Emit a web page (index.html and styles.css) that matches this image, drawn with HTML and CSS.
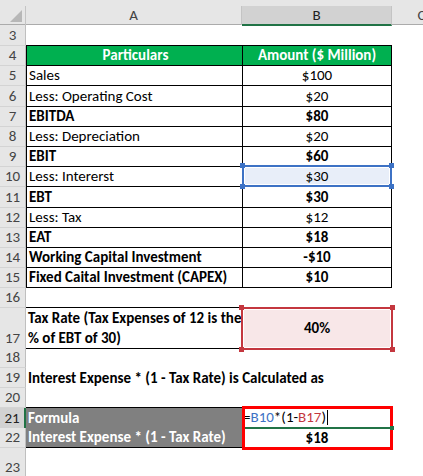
FILE: index.html
```html
<!DOCTYPE html>
<html>
<head>
<meta charset="utf-8">
<link rel="stylesheet" href="styles.css">
</head>
<body>
<div class="sheet">
  <div class="colhdr">
    <div class="corner"><svg width="26" height="25" viewBox="0 0 26 25"><polygon points="22,10 22,22 10,22" fill="#b7b7b7"/></svg></div>
    <div class="ch">A</div>
    <div class="ch sel">B</div>
    <div class="ch">C</div>
  </div>

  <div class="row r3"><div class="rh">3</div><div class="c a bb"></div><div class="c b bb"></div><div class="c"></div></div>
  <div class="row rt"><div class="rh">4</div><div class="c a tbl head">Particulars</div><div class="c b tbl head">Amount ($ Million)</div><div class="c"></div></div>
  <div class="row rt"><div class="rh">5</div><div class="c a tbl">Sales</div><div class="c b tbl">$100</div><div class="c"></div></div>
  <div class="row rt"><div class="rh">6</div><div class="c a tbl">Less: Operating Cost</div><div class="c b tbl">$20</div><div class="c"></div></div>
  <div class="row rt"><div class="rh">7</div><div class="c a tbl bold">EBITDA</div><div class="c b tbl bold">$80</div><div class="c"></div></div>
  <div class="row rt"><div class="rh">8</div><div class="c a tbl">Less: Depreciation</div><div class="c b tbl">$20</div><div class="c"></div></div>
  <div class="row rt"><div class="rh">9</div><div class="c a tbl bold">EBIT</div><div class="c b tbl bold">$60</div><div class="c"></div></div>
  <div class="row rt"><div class="rh">10</div><div class="c a tbl">Less: Intererst</div><div class="c b tbl refblue">$30<span class="hl hl-blue"><i class="h tl"></i><i class="h tr"></i><i class="h bl"></i><i class="h br"></i></span></div><div class="c"></div></div>
  <div class="row rt"><div class="rh">11</div><div class="c a tbl bold">EBT</div><div class="c b tbl bold">$30</div><div class="c"></div></div>
  <div class="row rt"><div class="rh">12</div><div class="c a tbl">Less: Tax</div><div class="c b tbl">$12</div><div class="c"></div></div>
  <div class="row rt"><div class="rh">13</div><div class="c a tbl bold">EAT</div><div class="c b tbl bold">$18</div><div class="c"></div></div>
  <div class="row rt"><div class="rh">14</div><div class="c a tbl bold">Working Capital Investment</div><div class="c b tbl bold">-$10</div><div class="c"></div></div>
  <div class="row rt"><div class="rh">15</div><div class="c a tbl bold">Fixed Caital Investment (CAPEX)</div><div class="c b tbl bold">$10</div><div class="c"></div></div>
  <div class="row r20"><div class="rh">16</div><div class="c a bb"></div><div class="c b"></div><div class="c"></div></div>
  <div class="row r17"><div class="rh">17</div><div class="c a bb bold wrap">Tax Rate (Tax Expenses of 12 is the<br>% of EBT of 30)</div><div class="c b bold mid refred">40%<span class="hl hl-red"><i class="h tl"></i><i class="h tr"></i><i class="h bl"></i><i class="h br"></i></span></div><div class="c"></div></div>
  <div class="row r20"><div class="rh">18</div><div class="c a"></div><div class="c b"></div><div class="c"></div></div>
  <div class="row r20"><div class="rh">19</div><div class="c a bold spill">Interest Expense * (1 - Tax Rate) is Calculated as</div><div class="c b"></div><div class="c"></div></div>
  <div class="row r20"><div class="rh">20</div><div class="c a bb"></div><div class="c b bb"></div><div class="c"></div></div>
  <div class="row r20"><div class="rh act">21</div><div class="c a gray gsep">Formula</div><div class="c b edit"><span class="fx">=<span class="rb">B10</span>*(1-<span class="rr">B17</span>)</span><span class="caret"></span><span class="redbox"></span><i class="gh"></i></div><div class="c"></div></div>
  <div class="row r20"><div class="rh">22</div><div class="c a gray bb">Interest Expense * (1 - Tax Rate)</div><div class="c b bold">$18</div><div class="c"></div></div>
  <div class="row r23"><div class="rh">23</div><div class="c a"></div><div class="c b"></div><div class="c"></div></div>
</div>
</body>
</html>
```

FILE: styles.css
```css
html, body {
  margin: 0;
  padding: 0;
  background: #ffffff;
  overflow: hidden;
}
body {
  width: 423px;
  height: 476px;
  font-family: Carlito, Calibri, Lato, "Liberation Sans", sans-serif;
  font-size: 15px;
  color: #000;
}
.sheet {
  width: 460px;
}
.colhdr {
  display: grid;
  grid-template-columns: 26px 216px 150px 60px;
  height: 25px;
  background: #e6e6e6;
  box-sizing: border-box;
  border-bottom: 1px solid #ababab;
}
.corner {
  border-right: 1px solid #c4c4c4;
  box-sizing: border-box;
  margin-top: 6px;
  overflow: hidden;
}
.corner svg { display: block; margin-top: -6px; }
.ch {
  margin-top: 6px;
  border-right: 1px solid #c4c4c4;
  box-sizing: border-box;
  display: flex;
  align-items: center;
  justify-content: center;
  color: #444;
  font-size: 15px;
  padding-bottom: 1px;
}
.ch.sel {
  background: #d2d2d2;
  border-bottom: 2px solid #217346;
  padding-bottom: 0;
  margin-bottom: -1px;
  color: #222;
}
.row {
  display: grid;
  grid-template-columns: 26px 216px 150px 60px;
}
.r3 { height: 21px; }
.rt { height: 20.2px; }
.r20 { height: 20px; }
.r17 { height: 40px; }
.r23 { height: 30px; }
.rh {
  background: #e6e6e6;
  border-right: 1px solid #bfbfbf;
  border-bottom: 1px solid #d4d4d4;
  box-sizing: border-box;
  display: flex;
  align-items: flex-end;
  justify-content: center;
  color: #444;
  font-size: 15px;
  line-height: 19px;
}
.rh.act {
  background: #d2d2d2;
  border-right: 2px solid #217346;
  color: #222;
}
.c {
  box-sizing: border-box;
  display: flex;
  align-items: flex-end;
  line-height: 19px;
  white-space: nowrap;
  position: relative;
}
.a { padding-left: 2px; }
.b { justify-content: center; }
.bb { border-bottom: 1px solid #000; }
.tbl { border-bottom: 1px solid #000; }
.a.tbl { border-left: 1px solid #000; }
.b.tbl { border-left: 1px solid #000; border-right: 1px solid #000; }
.bold { font-weight: 700; }
.head {
  background: #00b050;
  color: #fff;
  font-weight: 700;
  justify-content: center;
}
.wrap { line-height: 20px; }
.mid { align-items: center; }
.spill { overflow: visible; z-index: 1; }
.gray {
  background: #808080;
  color: #fff;
  font-weight: 700;
}
.gsep { border-bottom: 1px solid #c8c8c8; }
.refblue { background: #e8eef9; }
.refred { background: #f8e7e8; }
.hl {
  position: absolute;
  left: -1px;
  top: -2px;
  right: -1px;
  bottom: -1px;
  border: 2px solid #3d72c5;
  box-shadow: inset 0 0 0 1px #ffffff;
  z-index: 2;
}
.hl-red { border-color: #c4373f; top: -1px; bottom: -1px; }
.h {
  position: absolute;
  width: 5px;
  height: 5px;
  background: #3d72c5;
}
.hl-red .h { background: #c4373f; }
.h.tl { left: -4px; top: -4px; }
.h.tr { right: -4px; top: -4px; }
.h.bl { left: -4px; bottom: -4px; }
.h.br { right: -4px; bottom: -4px; }
.edit {
  justify-content: flex-start;
  padding-left: 1px;
  border-bottom: 2px solid #217346;
}
.fx { color: #000; }
.rb { color: #3d72c5; }
.rr { color: #c4373f; }
.caret {
  display: inline-block;
  width: 1px;
  height: 15px;
  background: #000;
  margin-left: 1px;
  margin-bottom: 2px;
}
.redbox {
  position: absolute;
  left: 0;
  top: -2px;
  width: 151px;
  height: 44px;
  box-sizing: border-box;
  border: 3px solid #ff0000;
  z-index: 3;
}
.gh {
  position: absolute;
  right: -2px;
  bottom: -3px;
  width: 4px;
  height: 4px;
  background: #217346;
  z-index: 4;
}
```
